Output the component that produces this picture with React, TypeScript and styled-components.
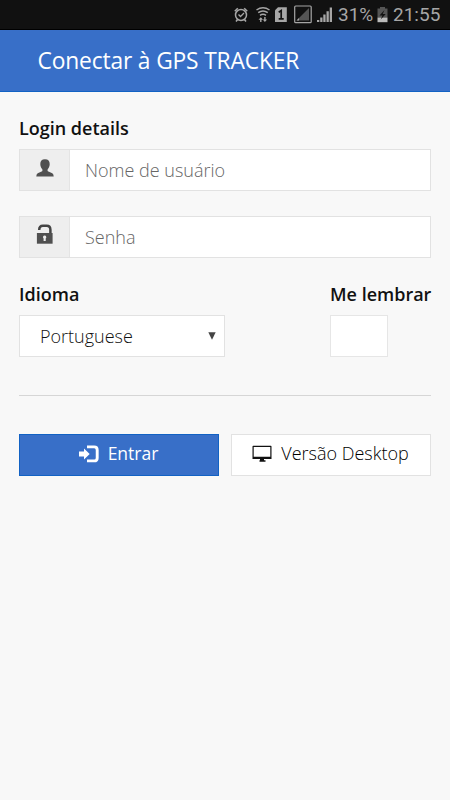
import React from 'react';
import styled, { createGlobalStyle } from 'styled-components';

const GlobalStyle = createGlobalStyle`
  * { box-sizing: border-box; }
  body { margin: 0; background: #f8f8f8; font-family: "Open Sans", sans-serif; color: #222; }
`;

const Screen = styled.div`
  width: 450px;
  height: 800px;
  background: #f8f8f8;
  overflow: hidden;
`;

const StatusBar = styled.div`
  height: 30px;
  background: #111;
  border-bottom: 1px solid #000;
  color: #a6a6a6;
  display: flex;
  align-items: center;
  padding-left: 233px;
  svg { display: block; flex: none; }
`;

const StatusText = styled.span<{ $left: number; $width: number }>`
  font: 400 19px/30px Roboto, sans-serif;
  margin-left: ${(p) => p.$left}px;
  width: ${(p) => p.$width}px;
  padding-top: 1px;
  white-space: nowrap;
`;

const Header = styled.header`
  height: 62px;
  background: #386fc8;
  border-bottom: 1px solid #1262c4;
  color: #fff;
  padding-left: 37.5px;
`;

const Title = styled.h1`
  margin: 0;
  font-size: 22.8px;
  font-weight: 400;
  line-height: 61px;
  letter-spacing: -0.16px;
`;

const Form = styled.form`
  padding: 24px 19px 0;
`;

const Label = styled.label`
  display: block;
  font-size: 18px;
  font-weight: 600;
  line-height: 24px;
  height: 33px;
  white-space: nowrap;
  color: #111;
`;

const InputGroup = styled.div`
  display: flex;
  height: 42px;
  border: 1px solid #e2e2e2;
  background: #fff;
  margin-bottom: 25px;
`;

const Addon = styled.span<{ $top: number }>`
  width: 50px;
  background: #eee;
  border-right: 1px solid #e4e4e4;
  display: flex;
  justify-content: center;
  padding-top: ${(p) => p.$top}px;
`;

const Input = styled.input`
  flex: 1;
  min-width: 0;
  border: 0;
  outline: 0;
  padding: 0 15px;
  background: transparent;
  font: 300 18px "Open Sans", sans-serif;
  &::placeholder { color: #666; opacity: 1; }
`;

const Options = styled.div`
  display: flex;
  justify-content: space-between;
  margin-top: -1px;
  padding-bottom: 38px;
  border-bottom: 1px solid #d6d6d6;
`;

const Field = styled.div<{ $width: number }>`
  width: ${(p) => p.$width}px;
`;

const Select = styled.div`
  height: 42px;
  border: 1px solid #e2e2e2;
  background: #fff;
  display: flex;
  align-items: center;
  justify-content: space-between;
  padding: 0 8px 0 20px;
  font-size: 18px;
  font-weight: 300;
  color: #111;
`;

const CheckBox = styled.div`
  width: 57.5px;
  height: 42px;
  border: 1px solid #e6e6e6;
  background: #fff;
`;

const Actions = styled.div`
  display: flex;
  justify-content: space-between;
  padding-top: 38px;
`;

const Button = styled.button<{ $primary?: boolean }>`
  width: 200px;
  height: 42px;
  border: 1px solid ${(p) => (p.$primary ? '#1262c4' : '#e2e2e2')};
  background: ${(p) => (p.$primary ? '#386fc8' : '#fff')};
  color: ${(p) => (p.$primary ? '#fff' : '#000')};
  display: flex;
  align-items: center;
  justify-content: center;
  gap: 9px;
  padding: 0 1px 2px 0;
  font: ${(p) => (p.$primary ? '400 17.5px' : '300 18px')} "Open Sans", sans-serif;
  white-space: nowrap;
  svg { flex: none; }
`;

const ButtonText = styled.span`
  padding-bottom: 2px;
`;

const StatusIcons = () => (
  <svg width="103" height="30" viewBox="233 0 103 30" fill="none" stroke="#a6a6a6">
    <circle cx="241" cy="15" r="5.5" strokeWidth="1.5" />
    <path d="M234.8 11.2l3-3M247.2 11.2l-3-3M237.6 19.5l-1.6 2M244.4 19.5l1.6 2" strokeWidth="1.6" />
    <path d="M238.5 14.5l2 2 3.5-3.5" strokeWidth="1.3" />
    <path d="M256.5 10q6.500-4.500 13 0M258.200 12.700q4.800-3.500 9.600 0M260 15.300q3-2.200 6 0" strokeWidth="1.5" />
    <path d="M260.800 18v4M264.900 17v4" strokeWidth="1.4" />
    <path d="M258.500 19.700l2.300-2.500 2.300 2.500zM262.700 19.500l2.200 2.500 2.200-2.500z" fill="#a6a6a6" stroke="none" />
    <path d="M278 7.200h8.800v14.800H275V10.200z" fill="#a6a6a6" stroke="none" />
    <path d="M278.700 12.200l2.500-1.700v8.500M278.700 18.800h5" stroke="#111" strokeWidth="1.700" />
    <rect x="294.700" y="6" width="16.500" height="16.700" rx="1" strokeWidth="1.200" />
    <path d="M309 8v12.500h-12.500z" fill="#555" stroke="none" />
    <path d="M299 18v2.500h-2.500z" fill="#a6a6a6" stroke="none" />
    <path d="M317 20h2.300v2H317zM320.200 17.500h2.300V22h-2.300zM323.300 14.500h2.300V22h-2.300zM326.500 11.300h2.300V22h-2.300zM329.700 7.500h2.300V22h-2.300z" fill="#a6a6a6" stroke="none" />
  </svg>
);

const BatteryIcon = () => (
  <svg width="11" height="30" viewBox="0 0 11 30">
    <path d="M3 7h5v1.500h2.500v9H.5v-9H3z" fill="#555" />
    <path d="M.5 17.500h10v4.700H.5z" fill="#bbb" />
    <path d="M7.500 10L2.500 15.500h3L3.700 19.500 8.700 14H5.700z" fill="#111" />
  </svg>
);

const UserIcon = () => (
  <svg width="18" height="20" viewBox="0 0 18 20" fill="#505050">
    <path d="M9 1.200c-3.300 0-4.700 2-4.700 4.700 0 2 .7 3.800 1.800 5 .7.900.4 2.200-.5 2.600L1.700 15.200Q.3 16 .3 18.500h17.400q0-2.500-1.400-3.300l-3.900-1.700c-.9-.4-1.200-1.700-.5-2.600 1.100-1.200 1.800-3 1.800-5 0-2.700-1.400-4.700-4.700-4.700z" />
  </svg>
);

const LockIcon = () => (
  <svg width="18" height="20" viewBox="0 0 18 20">
    <path d="M3.200 6q0-4.300 3.700-4.300h3.800q3.700 0 3.700 4V10" fill="none" stroke="#444" strokeWidth="2.500" />
    <path d="M.9 9h15.700v10.700H.9z" fill="#505050" />
    <path d="M8.700 11.500a1.700 1.700 0 0 1 1 3V17H7.600v-2.500a1.700 1.700 0 0 1 1.100-3z" fill="#eee" />
  </svg>
);

const LoginIcon = () => (
  <svg width="20" height="18" viewBox="0 0 20 18">
    <path d="M8 1.900h7.200q3 0 3 3v8q0 3-3 3H8" fill="none" stroke="#fff" strokeWidth="2.900" />
    <path d="M0 6.500h5V3.500L10.700 9 5 14.500V11.500H0z" fill="#fff" />
  </svg>
);

const DesktopIcon = () => (
  <svg width="20" height="18" viewBox="0 0 20 18" fill="#111">
    <path fillRule="evenodd" d="M1.200 .8h17.600q.7 0 .7.700v12.600H.5V1.500Q.5 .8 1.200 .8zM1.700 2v9.700h16.600V2z" />
    <path d="M8 13.500h4v1.800h1.500V16.700h-6v-1.400H8z" />
  </svg>
);

const CaretIcon = () => (
  <svg width="8" height="8" viewBox="0 0 8 8">
    <path d="M.3 .2h7.400L4 7.800z" fill="#444" />
  </svg>
);

export default function App() {
  return (
    <>
      <GlobalStyle />
      <Screen>
        <StatusBar>
          <StatusIcons />
          <StatusText $left={2} $width={39}>31%</StatusText>
          <BatteryIcon />
          <StatusText $left={5} $width={50}>21:55</StatusText>
        </StatusBar>
        <Header>
          <Title>Conectar à GPS TRACKER</Title>
        </Header>
        <Form onSubmit={(e) => e.preventDefault()}>
          <Label>Login details</Label>
          <InputGroup>
            <Addon $top={8}><UserIcon /></Addon>
            <Input placeholder="Nome de usuário" />
          </InputGroup>
          <InputGroup>
            <Addon $top={7}><LockIcon /></Addon>
            <Input type="password" placeholder="Senha" />
          </InputGroup>
          <Options>
            <Field $width={206}>
              <Label>Idioma</Label>
              <Select>Portuguese<CaretIcon /></Select>
            </Field>
            <Field $width={101}>
              <Label>Me lembrar</Label>
              <CheckBox />
            </Field>
          </Options>
          <Actions>
            <Button $primary><LoginIcon /><ButtonText>Entrar</ButtonText></Button>
            <Button><DesktopIcon /><ButtonText>Versão Desktop</ButtonText></Button>
          </Actions>
        </Form>
      </Screen>
    </>
  );
}
